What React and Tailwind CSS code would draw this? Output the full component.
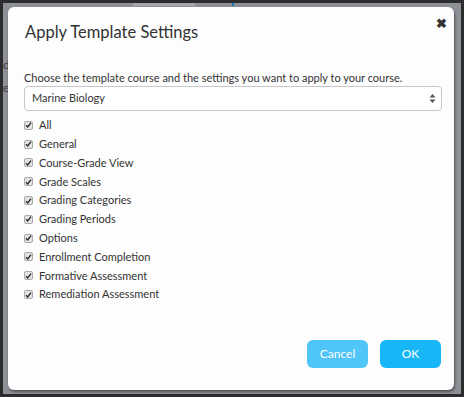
import React, { useState } from 'react';

const OPTIONS = [
  'All',
  'General',
  'Course-Grade View',
  'Grade Scales',
  'Grading Categories',
  'Grading Periods',
  'Options',
  'Enrollment Completion',
  'Formative Assessment',
  'Remediation Assessment',
];

const Check = ({ checked, onToggle }) => (
  <span
    onClick={onToggle}
    className="flex h-[9px] w-[9px] shrink-0 items-center justify-center rounded-[2px] border border-[#a9a9a9] bg-[#e4e4e4]"
  >
    {checked && (
      <svg width="8" height="8" viewBox="0 0 8 8">
        <path d="M1.2 4.2 L3.1 6.2 L6.9 1.2" fill="none" stroke="#2a2a2a" strokeWidth="1.6" />
      </svg>
    )}
  </span>
);

const App = () => {
  const [checked, setChecked] = useState(OPTIONS.map(() => true));

  const toggle = (i) => setChecked((prev) => prev.map((c, j) => (j === i ? !c : c)));

  return (
    <div className="relative h-[397px] w-[464px] overflow-hidden border-[3px] border-[#2d2d2f] bg-[#8e9197] font-['Lato',sans-serif]">
      {/* dimmed page behind the dialog */}
      <div className="flex h-[3px] w-full">
        <div className="ml-[130px] h-full w-[62px] bg-[#a4a7ac]" />
        <div className="ml-[37px] h-full w-[2px] bg-[#1e7fb8]" />
      </div>
      <div className="flex flex-col gap-[9px] pt-[52px] text-[12px] leading-[14px] text-[#3b3d40]">
        <span>d</span>
        <span>e</span>
      </div>

      {/* dialog */}
      <div className="absolute left-[5px] top-[4px] flex h-[383px] w-[446px] flex-col rounded-[6px] bg-[#fdfdfd] shadow-[1px_2px_3px_rgba(0,0,0,0.45)]">
        <div className="flex items-start justify-between pl-[17px] pr-[7px] pt-[15px]">
          <h2 className="text-[16.5px] leading-[20px] text-[#333]">Apply Template Settings</h2>
          <button className="-mt-[6px] text-[13px] font-bold leading-[14px] text-[#333]">✖</button>
        </div>

        <div className="pl-[16px] pr-[12px] pt-[29px]">
          <p className="text-[11px] leading-[14px] text-[#333]">
            Choose the template course and the settings you want to apply to your course.
          </p>
          <div className="mt-[1px] flex h-[25px] items-center justify-between rounded-[4px] border border-[#c8c8c8] bg-white pl-[7px] pr-[5px]">
            <span className="text-[11px] text-[#333]">Marine Biology</span>
            <svg width="7" height="11" viewBox="0 0 7 11">
              <path d="M3.5 1 L6.5 4.5 H0.5 Z" fill="#555" />
              <path d="M3.5 10 L6.5 6.5 H0.5 Z" fill="#555" />
            </svg>
          </div>

          <div className="mt-[5px] flex flex-col">
            {OPTIONS.map((label, i) => (
              <label key={label} className="flex h-[18.8px] items-center gap-[6px]">
                <Check checked={checked[i]} onToggle={() => toggle(i)} />
                <span className="text-[11px] text-[#333]">{label}</span>
              </label>
            ))}
          </div>
        </div>

        <div className="mt-auto flex justify-end gap-[12px] pb-[22px] pr-[13px]">
          <button className="h-[28px] w-[61px] rounded-[6px] bg-[#4fc5f8] text-[12px] text-white">
            Cancel
          </button>
          <button className="h-[28px] w-[61px] rounded-[6px] bg-[#16b6f7] text-[12px] text-white">
            OK
          </button>
        </div>
      </div>
    </div>
  );
};

export default App;
